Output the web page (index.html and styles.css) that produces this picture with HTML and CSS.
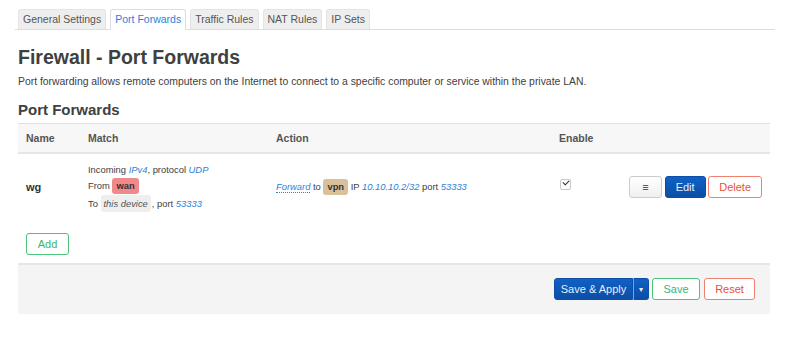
FILE: index.html
```html
<!DOCTYPE html>
<html lang="en">
<head>
    <meta charset="UTF-8">
    <title>Firewall - Port Forwards</title>
    <link rel="stylesheet" href="styles.css">
</head>
<body>
    <div class="page">
        <ul class="tabs">
            <li class="tab">General Settings</li>
            <li class="tab active">Port Forwards</li>
            <li class="tab">Traffic Rules</li>
            <li class="tab">NAT Rules</li>
            <li class="tab">IP Sets</li>
        </ul>

        <h2 class="title">Firewall - Port Forwards</h2>
        <div class="descr">Port forwarding allows remote computers on the Internet to connect to a specific computer or service within the private LAN.</div>

        <h3 class="section-title">Port Forwards</h3>
        <table class="rules">
            <thead>
                <tr>
                    <th class="col-name">Name</th>
                    <th class="col-match">Match</th>
                    <th class="col-action">Action</th>
                    <th class="col-enable">Enable</th>
                    <th class="col-btns"></th>
                </tr>
            </thead>
            <tbody>
                <tr>
                    <td class="rule-name">wg</td>
                    <td class="match">
                        <div class="line">Incoming <a class="val">IPv4</a>, protocol <a class="val">UDP</a></div>
                        <div class="line">From <span class="badge zone-wan">wan</span></div>
                        <div class="line">To <span class="badge device">this device</span>, port <a class="val">53333</a></div>
                    </td>
                    <td class="action">
                        <a class="val dotted">Forward</a> to <span class="badge zone-vpn">vpn</span> IP <a class="val">10.10.10.2/32</a> port <a class="val">53333</a>
                    </td>
                    <td class="enable"><span class="check"></span></td>
                    <td class="btns">
                        <button class="btn btn-plain">&#8801;</button>
                        <button class="btn btn-blue">Edit</button>
                        <button class="btn btn-red">Delete</button>
                    </td>
                </tr>
            </tbody>
        </table>
        <div class="add-row">
            <button class="btn btn-green">Add</button>
        </div>

        <div class="actions">
            <div class="split">
                <button class="btn btn-blue split-main">Save &amp; Apply</button>
                <button class="btn btn-blue split-caret">&#9662;</button>
            </div>
            <button class="btn btn-green">Save</button>
            <button class="btn btn-red">Reset</button>
        </div>
    </div>
</body>
</html>
```

FILE: styles.css
```css
body {
    margin: 0;
    font-family: "Liberation Sans", Arial, sans-serif;
    font-size: 11px;
    color: #404040;
    background: #ffffff;
}
.page {
    padding: 9px 30px 0 18px;
}
.tabs {
    display: flex;
    gap: 4px;
    list-style: none;
    margin: 0 -5px 0 -3px;
    padding: 0 0 0 3px;
    border-bottom: 1px solid #dddddd;
}
.tab {
    padding: 4px 4px 4px 4px;
    background: #eeeeee;
    border: 1px solid #e4e4e4;
    border-bottom: none;
    border-radius: 3px 3px 0 0;
    color: #555555;
    font-size: 10.5px;
    line-height: 11px;
}
.tab.active {
    background: #ffffff;
    color: #2b82d9;
    border-color: #dddddd;
    margin-bottom: -1px;
    padding-bottom: 5px;
}
.title {
    margin: 16px 0 0;
    font-size: 19.5px;
    line-height: 22px;
    color: #404040;
}
.descr {
    margin-top: 7px;
    line-height: 13px;
    font-size: 10.4px;
}
.section-title {
    margin: 13px 0 0;
    font-size: 15px;
    line-height: 17px;
}
.rules {
    width: 752px;
    margin-top: 5px;
    border-collapse: collapse;
}
.rules th {
    text-align: left;
    background: #f7f7f7;
    border-top: 1px solid #e0e0e0;
    border-bottom: 2px solid #e6e6e6;
    height: 28px;
    padding: 0 0 0 8px;
    color: #555555;
    font-size: 10.5px;
}
.col-name { width: 54px; }
.col-match { width: 180px; }
.col-action { width: 275px; }
.col-enable { width: 62px; }
.rules td {
    padding: 0 0 0 8px;
    height: 66px;
    font-size: 9.4px;
    vertical-align: middle;
}
.rule-name {
    font-weight: bold;
    font-size: 11px !important;
    color: #333333;
}
.line {
    line-height: 16.5px;
}
.val {
    color: #2b82d9;
    font-style: italic;
}
.dotted {
    border-bottom: 1px dotted #2b82d9;
}
.badge {
    display: inline-block;
    padding: 0 4px;
    line-height: 16px;
    border-radius: 3px;
    color: #333333;
}
.zone-wan {
    background: #f08a8a;
    font-weight: bold;
}
.zone-vpn {
    background: #d9bf9c;
    font-weight: bold;
}
.device {
    background: #eeeeee;
    font-style: italic;
    color: #555555;
    line-height: 17px;
    padding: 0 3px;
    margin-right: 1px;
}
.check {
    display: inline-block;
    width: 9px;
    height: 9px;
    margin-left: 1px;
    border: 1px solid #c8c8c8;
    border-radius: 2px;
    position: relative;
    top: -2px;
}
.check::after {
    content: "";
    position: absolute;
    left: 2px;
    top: 0;
    width: 5px;
    height: 3px;
    border-left: 1.5px solid #333333;
    border-bottom: 1.5px solid #333333;
    transform: rotate(-45deg);
}
.btns {
    text-align: right;
    padding-right: 8px !important;
    white-space: nowrap;
}
.btn {
    font-family: "Liberation Sans", Arial, sans-serif;
    font-size: 11px;
    height: 22px;
    padding: 0 10px;
    border-radius: 3px;
    background: #ffffff;
    cursor: pointer;
    vertical-align: middle;
}
.btn-plain {
    border: 1px solid #cccccc;
    background: linear-gradient(#ffffff, #f0f0f0);
    color: #333333;
    width: 33px;
    font-weight: bold;
}
.btn-blue {
    border: 1px solid #0b4fa8;
    background: linear-gradient(#1161c4, #0b4ea6);
    color: #e8eef8;
}
.btn-red {
    border: 1px solid #f08070;
    color: #e8503a;
}
.btn-green {
    border: 1px solid #4cc27a;
    color: #3bb56a;
}
.add-row {
    padding: 13px 0 8px 8px;
}
.add-row .btn {
    width: 43px;
    padding: 0;
}
.actions {
    width: 737px;
    display: flex;
    justify-content: flex-end;
    gap: 4px;
    background: #f4f4f4;
    border-top: 2px solid #e6e6e6;
    padding: 13px 15px 14px 0;
    border-radius: 0 0 3px 3px;
}
.split {
    display: flex;
    margin-right: -1px;
}
.split-main {
    border-radius: 3px 0 0 3px;
    width: 79px;
    padding: 0;
}
.split-caret {
    border-radius: 0 3px 3px 0;
    border-left: 1px solid #7aa3d8;
    font-size: 8px;
    width: 16px;
    padding: 0;
}
.actions .btn-green {
    width: 48px;
}
.actions .btn-red {
    width: 51px;
}
```
